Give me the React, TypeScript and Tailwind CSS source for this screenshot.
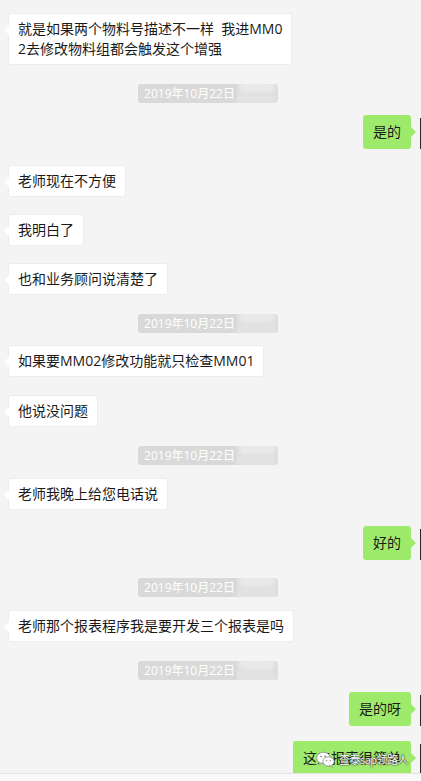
import React from "react";

const FONT = { fontFamily: '"Open Sans", "Noto Sans CJK SC", sans-serif' };

function LeftBubble({ mt, lines }: { mt: string; lines: string[] }) {
  return (
    <div className={`flex pl-[8px] ${mt}`}>
      <div className="relative rounded-[3px] bg-white border border-[#ededed] px-[9px] py-[5px] text-[14px] leading-[20px] text-[#1a1a1a] whitespace-pre">
        <span className="absolute left-[-5px] top-[11px] w-0 h-0 border-y-[5px] border-y-transparent border-r-[5px] border-r-white" />
        {lines.map((l, i) => (
          <div key={i}>{l}</div>
        ))}
      </div>
    </div>
  );
}

function RightBubble({ mt, text }: { mt: string; text: string }) {
  return (
    <div className={`flex justify-end items-start ${mt}`}>
      <div className="relative rounded-[3px] bg-[#9eea6a] px-[10px] py-[7px] text-[14px] leading-[20px] text-[#1a1a1a] whitespace-pre">
        <span className="absolute right-[-5px] top-[12px] w-0 h-0 border-y-[5px] border-y-transparent border-l-[5px] border-l-[#9eea6a]" />
        {text}
      </div>
      <div className="ml-[9px] mt-[3px] w-[1px] h-[31px] bg-[#2b2622]" />
    </div>
  );
}

function DateLabel({ mt }: { mt: string }) {
  return (
    <div className={`flex justify-center pr-[5px] ${mt}`}>
      <div className="flex h-[19px] rounded-[3px] overflow-hidden">
        <div className="bg-[#d9d9d9] pl-[6px] pr-[2px] text-[12px] leading-[19px] text-white">
          2019年10月22日
        </div>
        <div className="relative w-[41px] bg-[#dedede]">
          <div className="absolute left-[2px] top-[-3px] w-[36px] h-[12px] rounded-full bg-[#e9e9e9] blur-[2px]" />
          <div className="absolute left-[0px] bottom-0 w-[38px] h-[8px] bg-[#e2e2e2] blur-[1px]" />
        </div>
      </div>
    </div>
  );
}

function WeChatIcon() {
  return (
    <svg width="19" height="17" viewBox="0 0 19 17">
      <ellipse cx="7.5" cy="7" rx="6.8" ry="5.8" fill="#ffffff" stroke="#8a8a8a" strokeWidth="0.8" />
      <path d="M3.5 11.5 L2.5 14 L6 12.3 Z" fill="#ffffff" stroke="#8a8a8a" strokeWidth="0.6" />
      <ellipse cx="12.5" cy="10.5" rx="5.6" ry="4.6" fill="#ffffff" stroke="#8a8a8a" strokeWidth="0.8" />
      <path d="M15.5 14 L16.8 16.3 L13.2 14.8 Z" fill="#ffffff" stroke="#8a8a8a" strokeWidth="0.6" />
      <circle cx="5" cy="5.3" r="0.9" fill="#8a8a8a" />
      <circle cx="9.2" cy="5.3" r="0.9" fill="#8a8a8a" />
      <circle cx="10.6" cy="9.5" r="0.7" fill="#8a8a8a" />
      <circle cx="14.2" cy="9.5" r="0.7" fill="#8a8a8a" />
    </svg>
  );
}

export default function App() {
  return (
    <div className="relative w-[421px] h-[781px] overflow-hidden bg-[#f4f4f4]" style={FONT}>
      <div className="flex flex-col">
        <LeftBubble
          mt="mt-[13px]"
          lines={["就是如果两个物料号描述不一样  我进MM0", "2去修改物料组都会触发这个增强"]}
        />
        <DateLabel mt="mt-[19px]" />
        <RightBubble mt="mt-[12px]" text="是的" />
        <LeftBubble mt="mt-[16px]" lines={["老师现在不方便"]} />
        <LeftBubble mt="mt-[17px]" lines={["我明白了"]} />
        <LeftBubble mt="mt-[17px]" lines={["也和业务顾问说清楚了"]} />
        <DateLabel mt="mt-[19px]" />
        <LeftBubble mt="mt-[12px]" lines={["如果要MM02修改功能就只检查MM01"]} />
        <LeftBubble mt="mt-[18px]" lines={["他说没问题"]} />
        <DateLabel mt="mt-[19px]" />
        <LeftBubble mt="mt-[13px]" lines={["老师我晚上给您电话说"]} />
        <RightBubble mt="mt-[16px]" text="好的" />
        <DateLabel mt="mt-[18px]" />
        <LeftBubble mt="mt-[13px]" lines={["老师那个报表程序我是要开发三个报表是吗"]} />
        <DateLabel mt="mt-[19px]" />
        <RightBubble mt="mt-[12px]" text="是的呀" />
        <RightBubble mt="mt-[15px]" text="这三报表很简单" />
      </div>

      <div className="absolute left-[316px] top-[751px] flex items-center gap-[4px] whitespace-nowrap">
        <WeChatIcon />
        <span
          className="text-[11px] leading-[14px] tracking-[-0.5px] text-white whitespace-nowrap"
          style={{ textShadow: "0 0 1px #333, 0 0 1px #333, 0 0 2px #555" }}
        >
          查泰sap领路人
        </span>
      </div>

      <div className="absolute left-0 right-0 bottom-0 h-[8px] bg-[#f8f8f8] border-t border-[#e3e3e3]" />
    </div>
  );
}
